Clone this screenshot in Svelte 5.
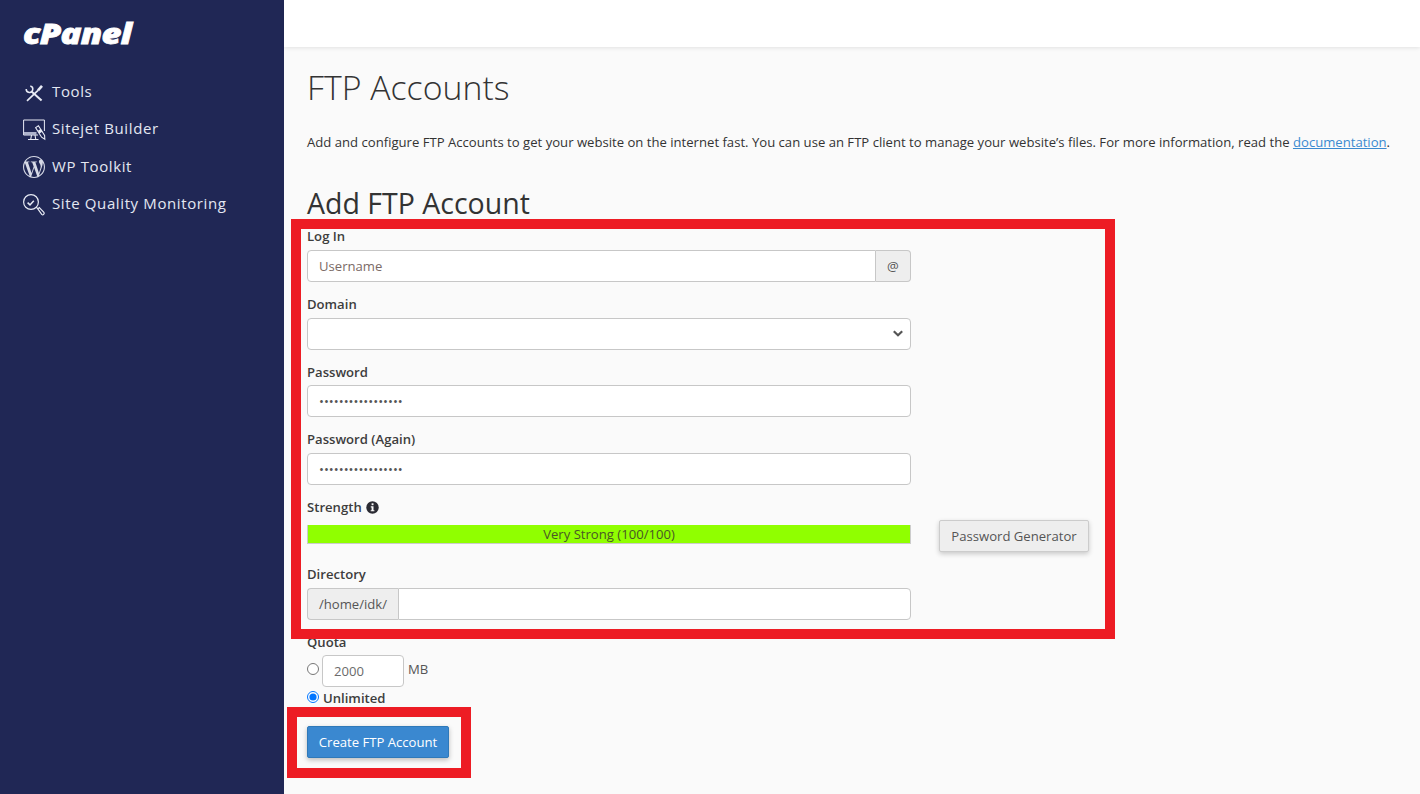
<script>
  let login = "";
  let dir = "";
  let quotaMode = "unlimited";
  const secret = "abcdefghijklmnopq";

  const nav = [
    { id: "tools", label: "Tools" },
    { id: "sitejet", label: "Sitejet Builder" },
    { id: "wp", label: "WP Toolkit" },
    { id: "quality", label: "Site Quality Monitoring" }
  ];
</script>

<div class="page">
  <aside class="sidebar">
    <div class="logo"><span>cPanel</span></div>
    <nav>
      {#each nav as item}
        <a class="nav-item" href="#{item.id}">
          <span class="nav-icon">
            {#if item.id === "tools"}
              <svg width="22" height="22" viewBox="0 0 22 22" fill="none" stroke="#e8ebf5">
                <path d="M7.3 4.9A3.3 3.3 0 1 1 3.2 8" stroke-width="1.5" />
                <path d="M8.5 10.5 18.6 19.6" stroke-width="2" />
                <path d="M19 4.8 15 9.4" stroke-width="2.6" />
                <path d="M15 9.4 4 19.8" stroke-width="1.7" />
              </svg>
            {:else if item.id === "sitejet"}
              <svg width="22" height="22" viewBox="0 0 22 22" fill="none" stroke="#e8ebf5">
                <path d="M15 17H.6V2h20.8v11" stroke-width="1" />
                <path d="M1 14h12.5v3H1z" fill="#aeb3cc" stroke="none" />
                <path d="M8.5 17l-.7 4M12 17l.7 4M5 21.5h10.5" stroke-width="1.1" />
                <path d="M12.6 9.6l2.8-1.8 6.2 9.6.2 3.8-3.2-2z" fill="#202755" stroke-width="1.1" />
                <path d="M14.8 12.8l3-1.9 1.7 2.7-3 1.9z" fill="#e8ebf5" stroke="none" />
              </svg>
            {:else if item.id === "wp"}
              <svg width="22" height="22" viewBox="0 0 24 24" fill="#d6d9e6">
                <path d="M21.469 6.825c.84 1.537 1.318 3.3 1.318 5.175 0 3.979-2.156 7.456-5.363 9.325l3.295-9.527c.615-1.54.82-2.771.82-3.864 0-.405-.026-.78-.07-1.11m-7.981.105c.647-.03 1.232-.105 1.232-.105.582-.075.514-.93-.067-.899 0 0-1.755.135-2.88.135-1.064 0-2.85-.15-2.85-.15-.585-.03-.661.855-.075.885 0 0 .54.061 1.125.09l1.68 4.605-2.37 7.08L5.354 6.9c.649-.03 1.234-.1 1.234-.1.585-.075.516-.93-.065-.896 0 0-1.746.138-2.874.138-.2 0-.438-.008-.69-.015C4.911 3.15 8.235 1.215 12 1.215c2.809 0 5.365 1.072 7.286 2.833-.046-.003-.091-.009-.141-.009-1.06 0-1.812.923-1.812 1.914 0 .89.513 1.643 1.06 2.531.411.72.89 1.643.89 2.977 0 .915-.354 1.994-.821 3.479l-1.075 3.585-3.9-11.61.001.014zM12 22.784c-1.059 0-2.081-.153-3.048-.437l3.237-9.406 3.315 9.087c.024.053.05.101.078.149-1.12.393-2.325.609-3.582.609M1.211 12c0-1.564.336-3.05.935-4.39L7.29 21.709C3.694 19.96 1.212 16.271 1.211 12M12 0C5.385 0 0 5.385 0 12s5.385 12 12 12 12-5.385 12-12S18.615 0 12 0" />
              </svg>
            {:else}
              <svg width="22" height="22" viewBox="0 0 22 22" fill="none" stroke="#e8ebf5">
                <circle cx="8" cy="9" r="7.4" stroke-width="1.2" />
                <path d="M4.6 9.6l2.4 2.3 3.8-4.2" stroke-width="1.5" />
                <path d="M13.4 14.4l1.5 1.4" stroke-width="1.2" />
                <path d="M14.8 15.9l1.5-1.3 4.6 4.8a1.5 1.5 0 0 1-2.2 2z" stroke-width="1.2" />
              </svg>
            {/if}
          </span>
          <span>{item.label}</span>
        </a>
      {/each}
    </nav>
  </aside>

  <div class="content">
    <header class="topbar"></header>
    <main>
      <h1>FTP Accounts</h1>
      <p class="intro">
        Add and configure FTP Accounts to get your website on the internet fast. You can use an FTP client to manage your website’s files. For more information, read the <a href="#docs">documentation</a>.
      </p>
      <h2>Add FTP Account</h2>

      <form on:submit|preventDefault>
        <div class="group">
          <label for="login">Log In</label>
          <div class="input-group">
            <input id="login" type="text" placeholder="Username" bind:value={login} />
            <span class="addon addon-right">@</span>
          </div>
        </div>

        <div class="group">
          <label for="domain">Domain</label>
          <select id="domain"><option></option></select>
        </div>

        <div class="group">
          <label for="pass">Password</label>
          <input id="pass" class="pw" type="password" value={secret} />
        </div>

        <div class="group">
          <label for="pass2">Password (Again)</label>
          <input id="pass2" class="pw" type="password" value={secret} />
        </div>

        <div class="strength-row">
          <div class="strength">
            <div class="strength-label">
              Strength
              <svg class="info" width="13" height="13" viewBox="0 0 13 13">
                <circle cx="6.5" cy="6.5" r="6.2" fill="#2b2b33" />
                <rect x="5.6" y="2.3" width="1.9" height="1.9" fill="#fafafa" />
                <path d="M4.8 5.3h2.7v3.9h.9v1.1H4.7V9.2h.9V6.4h-.8z" fill="#fafafa" />
              </svg>
            </div>
            <div class="bar">Very Strong (100/100)</div>
          </div>
          <button type="button" class="btn-generate">Password Generator</button>
        </div>

        <div class="group">
          <label for="dir">Directory</label>
          <div class="input-group">
            <span class="addon addon-left">/home/idk/</span>
            <input id="dir" type="text" bind:value={dir} />
          </div>
        </div>

        <div class="quota">
          <label for="quota">Quota</label>
          <div class="quota-row">
            <input type="radio" name="quota" value="limited" bind:group={quotaMode} />
            <input id="quota" class="quota-input" type="text" value="2000" />
            <span class="unit">MB</span>
          </div>
          <div class="unlimited">
            <input type="radio" name="quota" value="unlimited" bind:group={quotaMode} />
            <span>Unlimited</span>
          </div>
        </div>

        <button type="submit" class="btn-primary">Create FTP Account</button>
      </form>
    </main>
  </div>

  <!-- red annotation boxes drawn over the screenshot -->
  <div class="mark mark-form"></div>
  <div class="mark mark-button"></div>
</div>

<style>
  :global(body) {
    margin: 0;
    font-family: "Open Sans", sans-serif;
    color: #333;
  }
  * {
    box-sizing: border-box;
  }
  .page {
    position: relative;
    display: flex;
    height: 794px;
    overflow: hidden;
    background: #fafafa;
  }
  .sidebar {
    width: 284px;
    flex: none;
    background: #202755;
    padding: 17px 0 0 23px;
  }
  .logo {
    height: 55px;
  }
  .logo span {
    display: inline-block;
    font-size: 29px;
    line-height: 32px;
    font-weight: 800;
    font-style: italic;
    color: #fff;
    letter-spacing: -0.6px;
    -webkit-text-stroke: 0.8px #fff;
    transform: scaleX(1.19);
    transform-origin: left center;
  }
  nav {
    display: flex;
    flex-direction: column;
  }
  .nav-item {
    display: flex;
    align-items: center;
    gap: 7px;
    height: 37.5px;
    color: #e4e7f2;
    text-decoration: none;
    font-size: 15px;
    letter-spacing: 0.62px;
  }
  .nav-icon {
    display: flex;
    width: 22px;
    height: 22px;
    margin-top: 2px;
  }
  .nav-icon svg {
    overflow: visible;
  }
  .content {
    flex: 1;
    min-width: 0;
  }
  .topbar {
    height: 47px;
    background: #fff;
    box-shadow: 0 1px 4px rgba(0, 0, 0, 0.1);
  }
  main {
    padding: 0 23px;
  }
  h1 {
    margin: 18px 0 0;
    font-size: 33.8px;
    line-height: 44px;
    font-weight: 300;
    color: #333;
  }
  .intro {
    margin: 24px 0 0;
    font-size: 13.12px;
    line-height: 19px;
    white-space: nowrap;
    color: #333;
  }
  .intro a {
    color: #3a8ad0;
  }
  h2 {
    margin: 33px 0 0;
    font-size: 28.5px;
    line-height: 36px;
    font-weight: 400;
    color: #333;
  }
  form {
    width: 782px;
    padding-top: 8.4px;
  }
  .group {
    width: 604px;
    margin-bottom: 15px;
  }
  label,
  .strength-label {
    display: block;
    margin-bottom: 2px;
    height: 18.57px;
    font-size: 13.12px;
    line-height: 15px;
    font-weight: 600;
    color: #3d3d3d;
  }
  input[type="text"],
  input[type="password"],
  select {
    display: block;
    width: 100%;
    height: 32px;
    padding: 6px 11px;
    border: 1px solid #c7c7c7;
    border-radius: 4px;
    background: #fff;
    font: 13.12px "Open Sans", sans-serif;
    color: #555;
    outline: none;
  }
  input::placeholder {
    color: #7a6a66;
    opacity: 1;
  }
  select {
    appearance: none;
    background-image: url("data:image/svg+xml,%3Csvg xmlns='http://www.w3.org/2000/svg' width='10' height='7' viewBox='0 0 10 7'%3E%3Cpath d='M.8 1.2 5 5.2 9.2 1.2' fill='none' stroke='%23555' stroke-width='2.2'/%3E%3C/svg%3E");
    background-repeat: no-repeat;
    background-position: right 7px center;
  }
  .input-group {
    display: flex;
  }
  .input-group input {
    flex: 1;
    min-width: 0;
  }
  .addon {
    display: flex;
    align-items: center;
    height: 32px;
    padding: 0 11px;
    border: 1px solid #c7c7c7;
    background: #eee;
    font-size: 13.12px;
    color: #555;
  }
  .addon-right {
    border-left: 0;
    border-radius: 0 4px 4px 0;
    width: 35px;
    justify-content: center;
    padding: 0;
  }
  .input-group input:first-child {
    border-radius: 4px 0 0 4px;
  }
  .addon-left {
    border-right: 0;
    border-radius: 4px 0 0 4px;
  }
  .addon-left + input {
    border-radius: 0 4px 4px 0;
  }
  .strength-row {
    display: flex;
    align-items: flex-end;
    gap: 28px;
    margin-bottom: 15px;
  }
  .strength {
    width: 604px;
    height: 52.5px;
  }
  .strength-label {
    display: flex;
    align-items: center;
    gap: 4px;
    height: 15px;
    margin-bottom: 10.57px;
  }
  .bar {
    height: 19px;
    background: #90ff00;
    border: 1px solid #ccc;
    border-width: 0 1px 1px 1px;
    text-align: center;
    font-size: 13.12px;
    line-height: 18px;
    color: #4a5726;
  }
  .btn-generate {
    width: 150px;
    height: 32px;
    padding: 0;
    border: 1px solid #ccc;
    border-radius: 2px;
    background: #eee;
    box-shadow: 0 2px 5px rgba(0, 0, 0, 0.2);
    font: 13.12px "Open Sans", sans-serif;
    color: #555;
  }
  .quota-row {
    display: flex;
    align-items: center;
    height: 32px;
  }
  input[type="radio"] {
    width: 12px;
    height: 12px;
    margin: 0 3px 0 0;
    flex: none;
  }
  .quota-row input[type="radio"] {
    margin-top: -5px;
  }
  input.quota-input {
    width: 82px;
    margin-right: 4px;
    color: #6b6b6b;
  }
  .unit {
    font-size: 13.12px;
    color: #555;
    margin-top: -5px;
  }
  .unlimited {
    display: flex;
    align-items: center;
    height: 22px;
    font-size: 13.12px;
    font-weight: 600;
    color: #3d3d3d;
  }
  .unlimited input[type="radio"] {
    margin-top: -3px;
    margin-right: 4px;
  }
  .btn-primary {
    display: block;
    width: 142px;
    height: 32px;
    margin-top: 17px;
    padding: 0;
    border: 1px solid #2f79b9;
    border-radius: 2px;
    background: #3a88d0;
    box-shadow: 0 2px 5px rgba(0, 0, 0, 0.25);
    font: 13.12px "Open Sans", sans-serif;
    color: #fff;
  }
  .mark {
    position: absolute;
    border: 10px solid #ed1c24;
    pointer-events: none;
  }
  .mark-form {
    left: 291px;
    top: 219px;
    width: 824px;
    height: 420px;
  }
  .mark-button {
    left: 287px;
    top: 707px;
    width: 184px;
    height: 71px;
  }
</style>
